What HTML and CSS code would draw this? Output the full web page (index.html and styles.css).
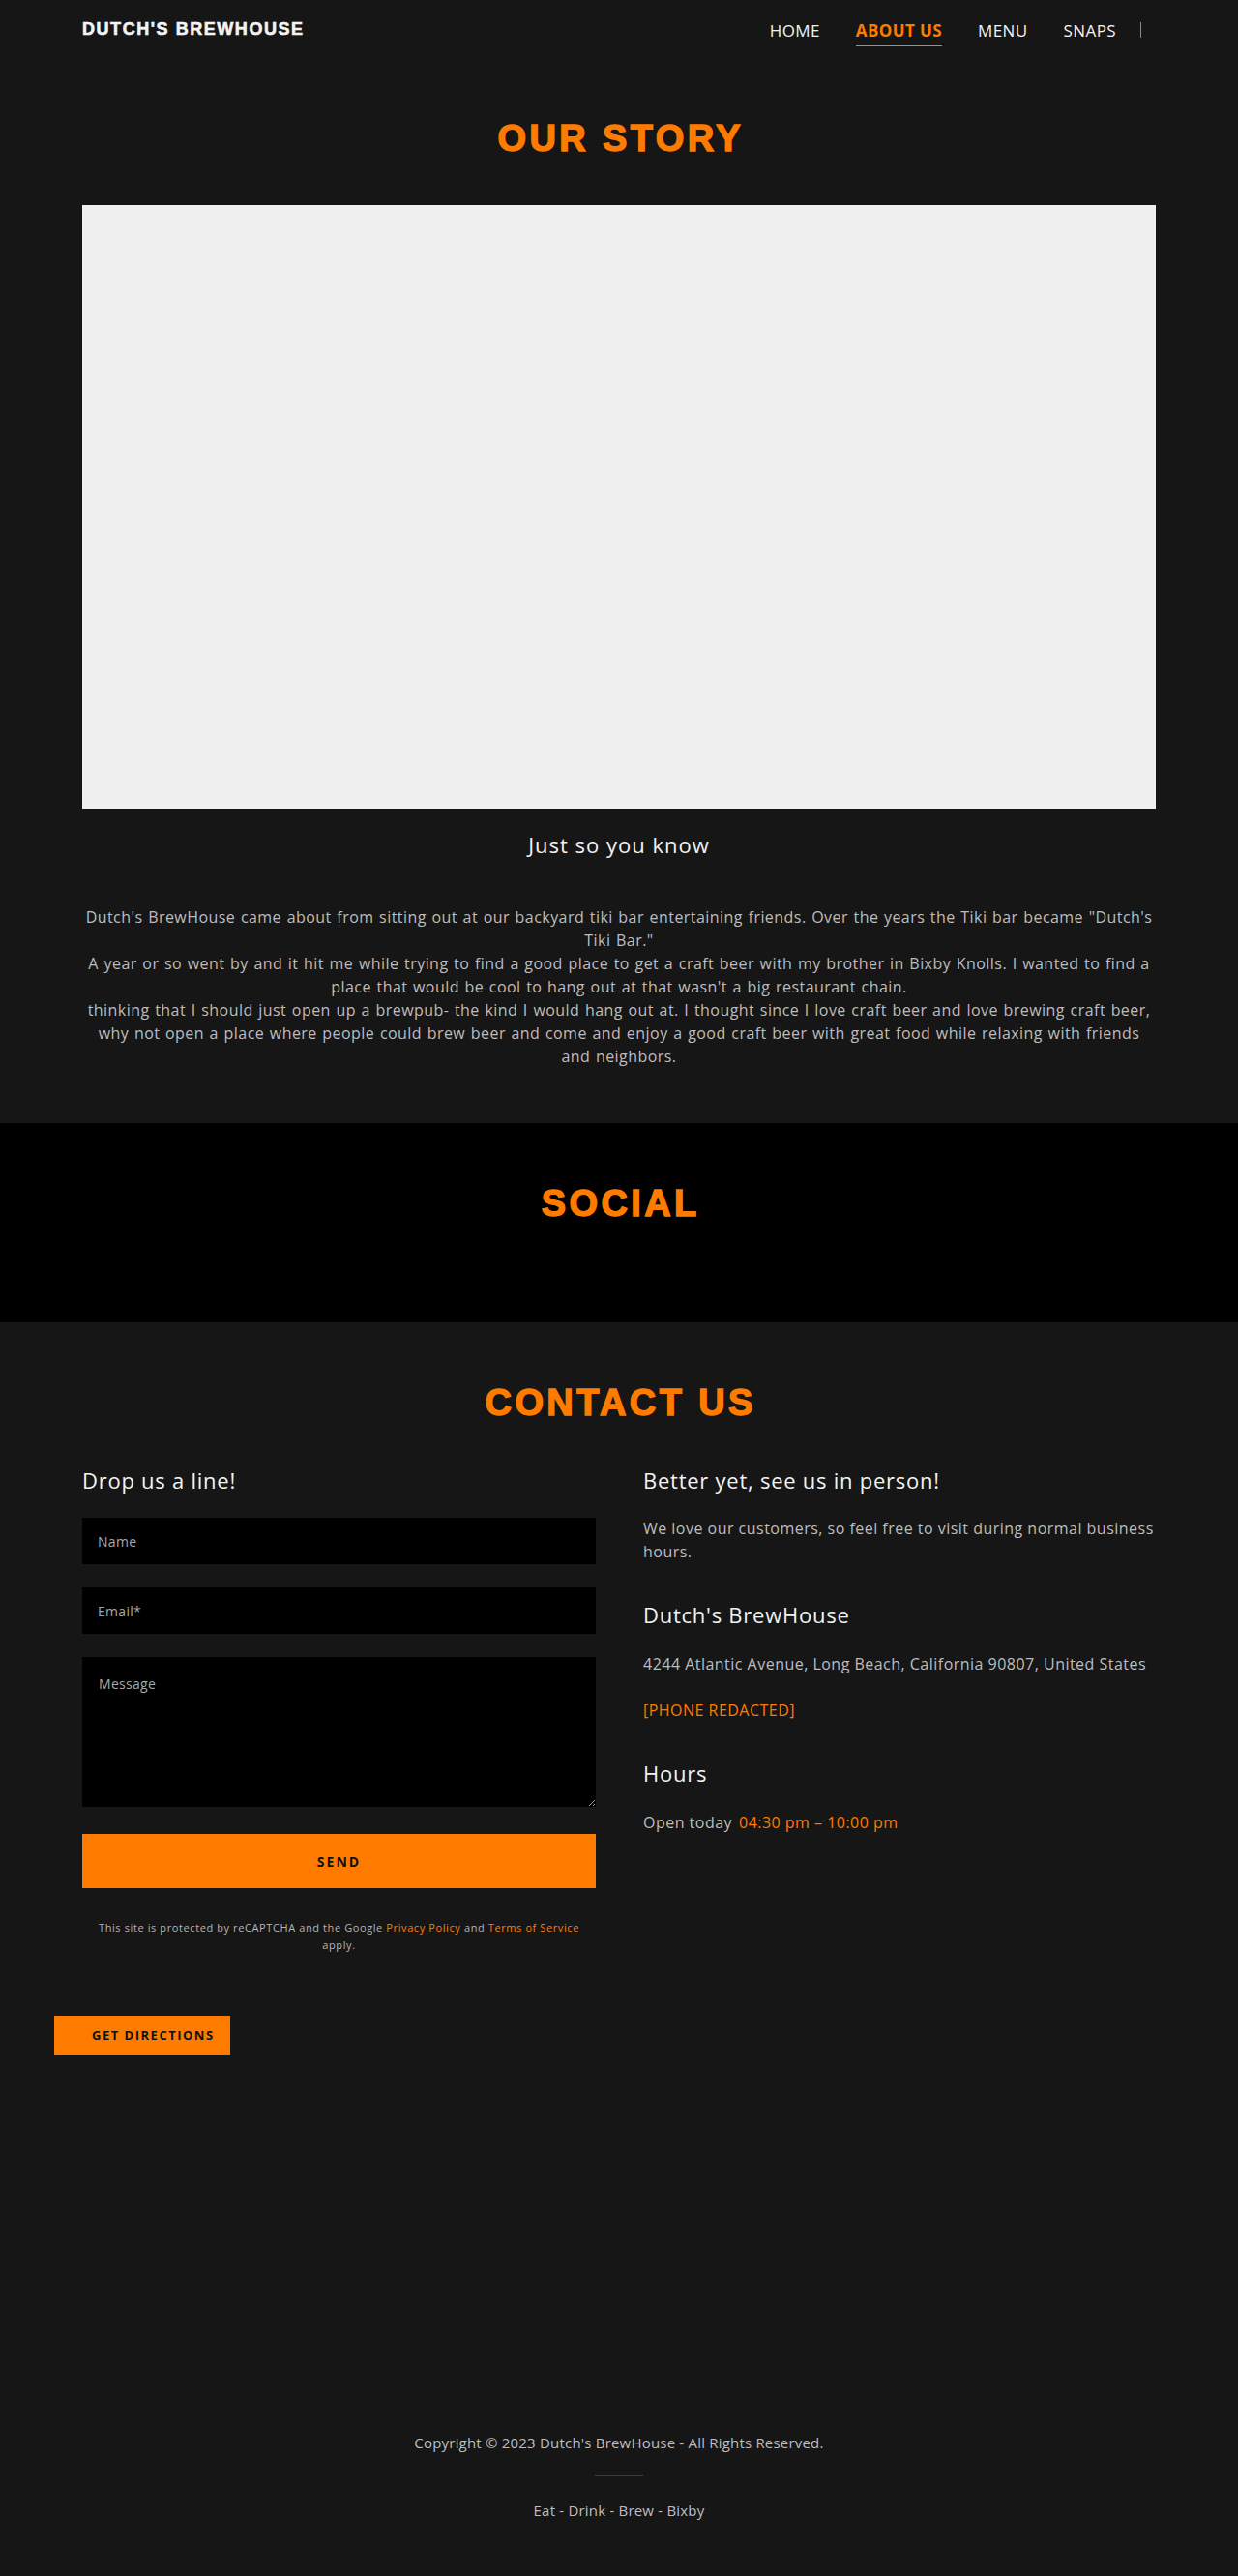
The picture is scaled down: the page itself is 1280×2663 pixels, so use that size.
FILE: index.html
```html
<!DOCTYPE html>
<html lang="en">
<head>
<meta charset="utf-8">
<title>Dutch's BrewHouse - About Us</title>
<link rel="stylesheet" href="styles.css">
</head>
<body>
<header class="site-header">
  <a class="logo" href="#">DUTCH'S BREWHOUSE</a>
  <nav class="nav">
    <a class="nav-link" href="#">HOME</a>
    <a class="nav-link active" href="#">ABOUT US</a>
    <a class="nav-link" href="#">MENU</a>
    <a class="nav-link" href="#">SNAPS</a>
    <span class="nav-sep"></span>
  </nav>
</header>

<main>
  <section class="story">
    <div class="container">
      <h1 class="section-title">OUR STORY</h1>
      <div class="story-image"></div>
      <h4 class="story-sub">Just so you know</h4>
      <div class="story-text">
        <p>Dutch's BrewHouse came about from sitting out at our backyard tiki bar entertaining friends. Over the years the Tiki bar became "Dutch's Tiki Bar."</p>
        <p>A year or so went by and it hit me while trying to find a good place to get a craft beer with my brother in Bixby Knolls. I wanted to find a place that would be cool to hang out at that wasn't a big restaurant chain.</p>
        <p>thinking that I should just open up a brewpub- the kind I would hang out at. I thought since I love craft beer and love brewing craft beer, why not open a place where people could brew beer and come and enjoy a good craft beer with great food while relaxing with friends and neighbors.</p>
      </div>
    </div>
  </section>

  <section class="social">
    <h2 class="section-title">SOCIAL</h2>
  </section>

  <section class="contact">
    <div class="container">
      <h2 class="section-title">CONTACT US</h2>
      <div class="contact-grid">
        <div class="contact-form">
          <h4 class="col-title">Drop us a line!</h4>
          <form class="form" onsubmit="return false">
            <input class="field" type="text" placeholder="Name">
            <input class="field" type="email" placeholder="Email*">
            <textarea class="field field-area" placeholder="Message"></textarea>
            <button class="btn-send" type="submit">SEND</button>
          </form>
          <p class="recaptcha">This site is protected by reCAPTCHA and the Google <a href="#">Privacy Policy</a> and <a href="#">Terms of Service</a> apply.</p>
        </div>
        <div class="contact-info">
          <h4 class="col-title">Better yet, see us in person!</h4>
          <p class="info-text">We love our customers, so feel free to visit during normal business hours.</p>
          <h4 class="col-title info-gap">Dutch's BrewHouse</h4>
          <p class="info-text info-line">4244 Atlantic Avenue, Long Beach, California 90807, United States</p>
          <p class="info-text info-line"><a class="phone" href="#">[PHONE REDACTED]</a></p>
          <h4 class="col-title info-gap">Hours</h4>
          <p class="info-text info-line hours"><span>Open today</span><span class="hours-time">04:30 pm – 10:00 pm</span></p>
        </div>
      </div>
    </div>
  </section>

  <section class="map">
    <a class="btn-directions" href="#">GET DIRECTIONS</a>
  </section>
</main>

<footer class="site-footer">
  <p class="copyright">Copyright © 2023 Dutch's BrewHouse - All Rights Reserved.</p>
  <div class="footer-rule"></div>
  <p class="tagline">Eat - Drink - Brew - Bixby</p>
</footer>
</body>
</html>
```

FILE: styles.css
```css
* {
  box-sizing: border-box;
}

html, body {
  margin: 0;
  padding: 0;
}

body {
  background: #161616;
  color: #bdbdbd;
  font-family: "Open Sans", "Noto Sans", sans-serif;
  font-size: 16px;
}

a {
  text-decoration: none;
  color: inherit;
}

p, h1, h2, h4 {
  margin: 0;
}

.container {
  width: 1110px;
  margin: 0 auto;
}

/* Header */
.site-header {
  height: 64px;
  padding: 21px 85px 0;
  display: flex;
  justify-content: space-between;
  align-items: flex-start;
}

.logo {
  font-family: "Liberation Sans", Arial, sans-serif;
  font-weight: 700;
  font-size: 18px;
  line-height: 18px;
  letter-spacing: 1.55px;
  color: #f4f4f4;
  -webkit-text-stroke: 0.6px #f4f4f4;
}

.nav {
  display: flex;
  align-items: flex-start;
  gap: 37px;
  margin-top: 2px;
  margin-right: 15px;
}

.nav-link {
  font-size: 17px;
  line-height: 17px;
  letter-spacing: 0.4px;
  padding-bottom: 7px;
  border-bottom: 1px solid transparent;
  color: #f2f2f2;
}

.nav-link.active {
  color: #ff7b00;
  font-weight: 700;
  border-bottom-color: #ff7b00;
}

.nav-sep {
  width: 1px;
  height: 16px;
  background: #8a8a8a;
  margin-left: -12px;
}

/* Section titles */
.section-title {
  font-family: "Liberation Sans", Arial, sans-serif;
  font-weight: 700;
  font-size: 38px;
  line-height: 38px;
  letter-spacing: 3.4px;
  padding-left: 3.4px;
  text-align: center;
  color: #ff7b00;
  -webkit-text-stroke: 1.4px #ff7b00;
}

/* Story */
.story {
  padding: 60px 0 57px;
}

.story .section-title {
  margin-bottom: 50px;
}

.story-image {
  width: 100%;
  aspect-ratio: 16 / 9;
  background: #f0f0f0;
}

.story-sub {
  margin-top: 23px;
  font-size: 22px;
  line-height: 28px;
  font-weight: 400;
  letter-spacing: 1px;
  color: #f2f2f2;
  text-align: center;
}

.story-text {
  width: 1108px;
  margin: 49px auto 0;
  text-align: center;
  font-size: 16px;
  line-height: 24px;
  letter-spacing: 0.45px;
  word-spacing: 1px;
  color: #bdbdbd;
}

/* Social */
.social {
  background: #000;
  padding: 64px 0 104px;
}

/* Contact */
.contact {
  padding: 64px 0 40px;
}

.contact .section-title {
  margin-bottom: 47px;
}

.contact-grid {
  display: grid;
  grid-template-columns: 531px 530px;
  column-gap: 49px;
}

.col-title {
  font-size: 22px;
  line-height: 28px;
  font-weight: 400;
  letter-spacing: 0.75px;
  color: #f2f2f2;
}

.form {
  margin-top: 25px;
  display: flex;
  flex-direction: column;
}

.field {
  display: block;
  width: 100%;
  height: 48px;
  margin: 0 0 24px;
  padding: 0 16px;
  border: none;
  border-radius: 0;
  background: #000;
  color: #eee;
  font-family: "Open Sans", "Noto Sans", sans-serif;
  font-size: 14px;
  letter-spacing: 0.3px;
  outline: none;
}

.field::placeholder {
  color: #a8a8a8;
}

.field-area {
  height: 155px;
  padding: 18px 17px;
  margin-bottom: 28px;
  line-height: 20px;
  resize: vertical;
}

.btn-send {
  height: 56px;
  width: 100%;
  border: none;
  background: #ff7b00;
  color: #111;
  font-family: "Open Sans", "Noto Sans", sans-serif;
  font-weight: 700;
  font-size: 14px;
  letter-spacing: 2px;
  cursor: pointer;
}

.recaptcha {
  margin-top: 32px;
  padding: 0 8px;
  font-size: 11px;
  line-height: 18px;
  letter-spacing: 0.6px;
  text-align: center;
  color: #b4b4b4;
}

.recaptcha a {
  color: #ff7b00;
}

.info-text {
  margin-top: 24px;
  font-size: 16px;
  line-height: 24px;
  letter-spacing: 0.48px;
  color: #bdbdbd;
}

.info-gap {
  margin-top: 39px;
}

.info-line {
  margin-top: 25px;
}

.info-line + .info-line {
  margin-top: 24px;
}

.phone {
  color: #ff7b00;
}

.hours {
  display: flex;
  gap: 7px;
}

.hours-time {
  color: #ff7b00;
}

/* Map / directions */
.map {
  height: 399px;
  padding: 24px 0 0 56px;
}

.btn-directions {
  display: inline-block;
  height: 40px;
  line-height: 40px;
  padding: 0 16px 0 39px;
  background: #ff7b00;
  color: #111;
  font-weight: 700;
  font-size: 13px;
  letter-spacing: 1.5px;
}

/* Footer */
.site-footer {
  padding: 54px 0 55px;
  text-align: center;
  color: #bdbdbd;
}

.copyright,
.tagline {
  font-size: 15px;
  line-height: 24px;
  letter-spacing: 0.2px;
}

.footer-rule {
  width: 50px;
  height: 1px;
  background: #3c3c3c;
  margin: 22px auto 23px;
}
```
